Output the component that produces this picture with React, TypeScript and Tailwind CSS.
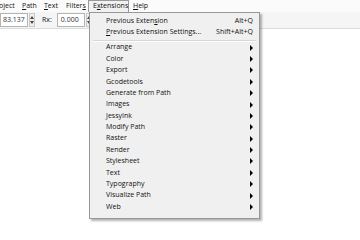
import React from "react";

const font = { fontFamily: '"Open Sans", "Noto Sans", sans-serif' };

const submenus = [
  "Arrange",
  "Color",
  "Export",
  "Gcodetools",
  "Generate from Path",
  "Images",
  "JessyInk",
  "Modify Path",
  "Raster",
  "Render",
  "Stylesheet",
  "Text",
  "Typography",
  "Visualize Path",
  "Web",
];

function Spinner() {
  return (
    <div className="flex h-[14px] w-[6px] flex-col items-center justify-center gap-[2px] border border-[#c8c8c8] bg-[#f0f0f0]">
      <span className="h-0 w-0 border-x-[2px] border-b-[3px] border-x-transparent border-b-[#444]" />
      <span className="h-0 w-0 border-x-[2px] border-t-[3px] border-x-transparent border-t-[#444]" />
    </div>
  );
}

function Arrow() {
  return (
    <span className="h-0 w-0 border-y-[3px] border-l-[3px] border-y-transparent border-l-black" />
  );
}

function U({ children }: { children: React.ReactNode }) {
  return <span className="underline underline-offset-1">{children}</span>;
}

export default function App() {
  return (
    <div
      className="relative h-[240px] w-[360px] overflow-hidden whitespace-nowrap bg-white text-[7px] text-[#111]"
      style={font}
    >
      {/* menu bar */}
      <div className="flex h-[12px] items-center bg-[#fbfbfb]">
        <span className="w-[23px] -ml-[1px]">oject</span>
        <span className="w-[22px]">
          <U>P</U>ath
        </span>
        <span className="w-[22px]">
          <U>T</U>ext
        </span>
        <span className="w-[22px]">
          Filter<U>s</U>
        </span>
        <span className="flex h-[12px] w-[41px] items-center border border-b-0 border-[#999] bg-[#f2f2f2] pl-[4px]">
          E<U>x</U>tensions
        </span>
        <span className="ml-[4px]">
          <U>H</U>elp
        </span>
      </div>

      {/* tool controls */}
      <div className="flex h-[17px] items-center gap-[1px] border-b border-[#dcdcdc] bg-[#f5f5f5]">
        <div className="flex h-[14px] w-[28px] items-center border border-[#b4b4b4] bg-white pl-[2px] text-[#333]">
          83.137
        </div>
        <Spinner />
        <span className="ml-[6px] mr-[4px]">Rx:</span>
        <div className="flex h-[14px] w-[28px] items-center border border-[#b4b4b4] bg-white pl-[3px] text-[#333]">
          0.000
        </div>
        <Spinner />
      </div>

      {/* Extensions dropdown */}
      <div className="absolute left-[89px] top-[12px] w-[171px] border border-[#979797] bg-[#f0f0f0] pt-[2px] pb-[5px] shadow-[2px_2px_2px_rgba(0,0,0,0.3)]">
        <div className="flex h-[11.5px] items-center justify-between pl-[16px] pr-[6px]">
          <span>
            Previous Exten<U>s</U>ion
          </span>
          <span>Alt+Q</span>
        </div>
        <div className="flex h-[11.5px] items-center justify-between pl-[16px] pr-[6px]">
          <span>
            <U>P</U>revious Extension Settings...
          </span>
          <span>Shift+Alt+Q</span>
        </div>
        <div className="mx-[3px] mt-[2px] border-t border-b border-t-[#d7d7d7] border-b-white" />
        {submenus.map((s) => (
          <div
            key={s}
            className="flex h-[11.38px] items-center justify-between pl-[16px] pr-[6px]"
          >
            <span>{s}</span>
            <Arrow />
          </div>
        ))}
      </div>
    </div>
  );
}
